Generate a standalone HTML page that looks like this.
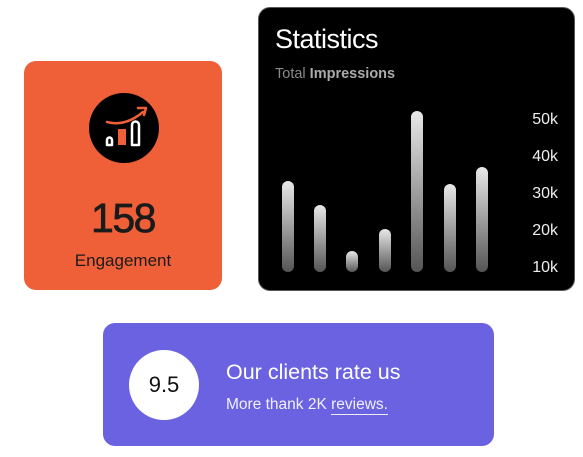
<!DOCTYPE html>
<html><head><meta charset="utf-8"><style>
*{margin:0;padding:0;box-sizing:border-box}
body{width:583px;height:457px;background:#fff;font-family:"Liberation Sans",sans-serif;position:relative;overflow:hidden}
.o{position:absolute;left:24px;top:61px;width:198px;height:229px;background:#EF5F38;border-radius:12px}
.circ{position:absolute;left:89px;top:93px;width:70px;height:70px;border-radius:50%;background:#000}
.n{position:absolute;left:24px;width:198px;top:195px;line-height:46px;text-align:center;font-size:41px;color:#1b1b1b;letter-spacing:-1.5px;-webkit-text-stroke:0.7px #1b1b1b}
.e{position:absolute;left:24px;width:198px;top:251px;text-align:center;font-size:17px;color:#1b1b1b}
.b{position:absolute;left:258px;top:7px;width:317px;height:284px;background:#000;border-radius:12px;border:1px solid #555}
.t{position:absolute;left:275px;top:24px;font-size:27px;color:#fff;letter-spacing:-0.5px}
.s{position:absolute;left:275px;top:66px;font-size:14.5px;color:#8a8a8a}
.s b{color:#aaa;font-weight:bold}
.bar{position:absolute;width:12px;border-radius:6px;background:linear-gradient(#e8e8e8,#555)}
.lab{position:absolute;right:25px;font-size:16px;color:#eee;text-align:right}
.p{position:absolute;left:103px;top:323px;width:391px;height:123px;background:#6A62E0;border-radius:12px}
.wc{position:absolute;left:129px;top:350px;width:70px;height:70px;border-radius:50%;background:#fff;text-align:center;line-height:70px;font-size:22px;color:#111}
.h{position:absolute;left:226px;top:360px;font-size:21.5px;color:#fff}
.sub{position:absolute;left:226px;top:396px;font-size:15.5px;color:#f0f0ff}
.sub u{text-decoration:none;border-bottom:1.5px solid #eee;padding-bottom:1px}
</style></head><body>
<div class="o"></div>
<div class="circ"></div>
<svg style="position:absolute;left:89px;top:93px" width="70" height="70" viewBox="0 0 70 70">
<path d="M18 29 Q36 34 54 19" stroke="#EF5F38" stroke-width="2.5" fill="none" stroke-linecap="round"/>
<path d="M49 15 L57 15 L55 22" stroke="#EF5F38" stroke-width="2.5" fill="none" stroke-linecap="round" stroke-linejoin="round"/>
<path d="M18 52 V47 a2.5 2.5 0 0 1 5 0 V52 Z" stroke="#fff" stroke-width="2.5" fill="none" stroke-linejoin="round"/>
<rect x="29" y="36" width="8" height="16" fill="#EF5F38"/>
<path d="M43 52 V32 a3.5 3.5 0 0 1 7 0 V52 Z" stroke="#fff" stroke-width="2.5" fill="none" stroke-linejoin="round"/>
</svg>
<div class="n">158</div>
<div class="e">Engagement</div>

<div class="b"></div>
<div class="t">Statistics</div>
<div class="s">Total <b>Impressions</b></div>
<div class="bar" style="left:282px;top:181px;height:91px"></div>
<div class="bar" style="left:314px;top:205px;height:67px"></div>
<div class="bar" style="left:346px;top:251px;height:21px"></div>
<div class="bar" style="left:379px;top:229px;height:43px"></div>
<div class="bar" style="left:411px;top:111px;height:161px"></div>
<div class="bar" style="left:444px;top:184px;height:88px"></div>
<div class="bar" style="left:476px;top:167px;height:105px"></div>
<div class="lab" style="top:111px">50k</div>
<div class="lab" style="top:148px">40k</div>
<div class="lab" style="top:185px">30k</div>
<div class="lab" style="top:222px">20k</div>
<div class="lab" style="top:259px">10k</div>

<div class="p"></div>
<div class="wc">9.5</div>
<div class="h">Our clients rate us</div>
<div class="sub">More thank 2K <u>reviews.</u></div>
</body></html>
